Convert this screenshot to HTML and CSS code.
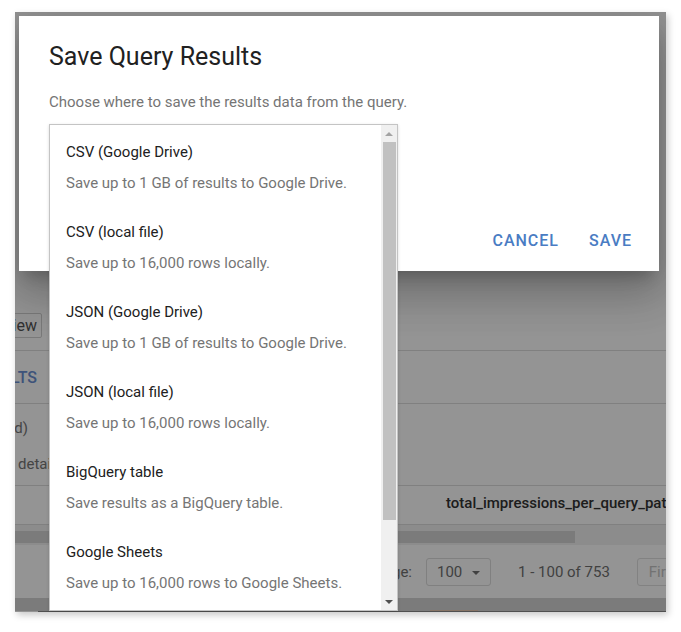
FILE: index.html
```html
<!DOCTYPE html>
<html lang="en">
<head>
<meta charset="utf-8">
<title>Save Query Results</title>
<link rel="stylesheet" href="styles.css">
</head>
<body>
<div class="frame">
  <div class="app">
    <div class="app-spacer"></div>
    <div class="toolbar-row">
      <div class="left-clip"><span class="btn-outline">Preview</span></div>
    </div>
    <div class="tabs-row">
      <div class="left-clip"><span class="tab-active">RESULTS</span></div>
    </div>
    <div class="info-block">
      <div class="left-clip info-line"><span>(unsaved)</span></div>
      <div class="info-line info-clip"><span>Job details</span></div>
    </div>
    <div class="header-row">
      <span class="col-head">total_impressions_per_query_pattern</span>
    </div>
    <div class="hscroll">
      <div class="hscroll-thumb"></div>
    </div>
    <div class="pager">
      <span class="pager-label">Rows per page:</span>
      <span class="pager-select">100 <span class="caret"></span></span>
      <span class="pager-range">1 - 100 of 753</span>
      <span class="pager-first">First</span>
    </div>
    <div class="bottom-bar"><span class="bottom-chip"></span></div>
    <div class="bottom-line"></div>
  </div>

  <div class="scrim"></div>

  <div class="dialog">
    <h1 class="dialog-title">Save Query Results</h1>
    <p class="dialog-text">Choose where to save the results data from the query.</p>
    <div class="dialog-actions">
      <span class="dlg-btn">CANCEL</span>
      <span class="dlg-btn">SAVE</span>
    </div>
  </div>

  <div class="listbox">
    <div class="options">
      <div class="option">
        <div class="opt-title">CSV (Google Drive)</div>
        <div class="opt-desc">Save up to 1 GB of results to Google Drive.</div>
      </div>
      <div class="option">
        <div class="opt-title">CSV (local file)</div>
        <div class="opt-desc">Save up to 16,000 rows locally.</div>
      </div>
      <div class="option">
        <div class="opt-title">JSON (Google Drive)</div>
        <div class="opt-desc">Save up to 1 GB of results to Google Drive.</div>
      </div>
      <div class="option">
        <div class="opt-title">JSON (local file)</div>
        <div class="opt-desc">Save up to 16,000 rows locally.</div>
      </div>
      <div class="option">
        <div class="opt-title">BigQuery table</div>
        <div class="opt-desc">Save results as a BigQuery table.</div>
      </div>
      <div class="option">
        <div class="opt-title">Google Sheets</div>
        <div class="opt-desc">Save up to 16,000 rows to Google Sheets.</div>
      </div>
    </div>
    <div class="vscroll">
      <div class="arrow arrow-up"></div>
      <div class="vthumb"></div>
      <div class="vtrack"></div>
      <div class="arrow arrow-down"></div>
    </div>
  </div>
</div>
</body>
</html>
```
FILE: styles.css
```css
* { box-sizing: border-box; }
html, body { margin: 0; padding: 0; background: #ffffff; }
body { font-family: Roboto, "Liberation Sans", Arial, sans-serif; width: 681px; height: 632px; overflow: hidden; }

.frame {
  position: relative;
  width: 651px;
  height: 600px;
  margin: 12px 0 0 15px;
  background: #ffffff;
  overflow: hidden;
  box-shadow: 2px 3px 7px rgba(0,0,0,0.22);
}

/* ---------- background app ---------- */
.app { display: flex; flex-direction: column; height: 100%; }
.app-spacer { height: 289px; flex-shrink: 0; }
.toolbar-row {
  height: 50px; flex-shrink: 0;
  display: flex; align-items: center;
  border-bottom: 1px solid #dcdcdc;
}
.left-clip {
  width: 27px; overflow: hidden;
  display: flex; justify-content: flex-end; flex-shrink: 0;
  white-space: nowrap;
}
.btn-outline {
  flex-shrink: 0;
  height: 25px; line-height: 23px;
  border: 1px solid #d0d0d0; border-radius: 2px;
  padding: 0 4px 0 8px;
  font-size: 16px; color: #555555;
}
.tabs-row {
  height: 53px; flex-shrink: 0;
  display: flex; align-items: center;
  border-bottom: 1px solid #dcdcdc;
}
.tabs-row .left-clip { width: 22px; }
.tab-active { flex-shrink: 0; font-size: 16px; font-weight: 500; color: #6b8fd2; }
.info-block {
  height: 82px; flex-shrink: 0;
  padding-top: 6px;
  border-bottom: 1px solid #dcdcdc;
}
.info-line { height: 36px; line-height: 36px; font-size: 15px; color: #777777; white-space: nowrap; }
.info-block .left-clip { width: 13px; }
.info-clip { margin-left: -26px; }
.header-row {
  height: 39px; flex-shrink: 0;
  display: flex; align-items: center;
  padding: 0 0 4px 431px;
  border-bottom: 1px solid #dcdcdc;
  white-space: nowrap;
}
.col-head { font-size: 15px; font-weight: 500; color: #333333; }
.hscroll { height: 20px; flex-shrink: 0; background: #f1f1f1; padding-top: 6px; }
.hscroll-thumb { width: 560px; height: 12px; background: #d5d5d5; }
.pager {
  height: 53px; flex-shrink: 0;
  display: flex; align-items: center;
  white-space: nowrap;
  font-size: 15px; color: #707070;
}
.pager-label { width: 397px; text-align: right; flex-shrink: 0; }
.pager-select {
  margin-left: 14px; flex-shrink: 0;
  width: 65px; height: 28px;
  border: 1px solid #dcdcdc; border-radius: 3px;
  display: flex; align-items: center; padding-left: 10px; gap: 10px;
  color: #707070;
}
.caret { width: 0; height: 0; border-left: 4px solid transparent; border-right: 4px solid transparent; border-top: 4px solid #707070; margin-top: 2px; }
.pager-range { margin-left: 27px; flex-shrink: 0; }
.pager-first {
  margin-left: 27px; flex-shrink: 0;
  height: 28px; line-height: 26px;
  border: 1px solid #e0e0e0; border-radius: 3px;
  padding: 0 10px 0 11px; color: #c4c4c4;
}
.bottom-bar { height: 13px; flex-shrink: 0; background: #d4d4d4; position: relative; }
.bottom-chip { position: absolute; left: 415px; bottom: 0; width: 48px; height: 1px; background: #e8c8b0; }
.bottom-line { height: 1px; flex-shrink: 0; margin-left: 23px; background: #8a8a8a; }

.scrim { position: absolute; inset: 0; background: rgba(0,0,0,0.42); }

/* ---------- dialog ---------- */
.dialog {
  position: absolute; left: 4px; top: 4px;
  width: 640px; height: 255px;
  background: #ffffff;
  padding: 24px 27px 13px 30px;
  display: flex; flex-direction: column;
  box-shadow: 0 11px 15px -7px rgba(0,0,0,0.22), 0 24px 38px 3px rgba(0,0,0,0.16), 0 9px 46px 8px rgba(0,0,0,0.12);
}
.dialog-title { margin: 0; font-size: 25px; line-height: 34px; font-weight: 400; color: #212121; }
.dialog-text { margin: 17px 0 0; font-size: 15px; line-height: 22px; color: #757575; }
.dialog-actions { margin-top: auto; display: flex; justify-content: flex-end; gap: 30px; height: 36px; align-items: center; }
.dlg-btn { font-size: 16px; font-weight: 500; letter-spacing: 1px; color: #4a7cc3; }

/* ---------- listbox ---------- */
.listbox {
  position: absolute; left: 34px; top: 112px;
  width: 349px; height: 487px;
  background: #ffffff;
  border: 1px solid #c4c4c4;
  display: flex;
  box-shadow: 0 1px 3px rgba(0,0,0,0.15);
}
.options { flex: 1; overflow: hidden; }
.option { height: 80px; padding: 17px 16px 0 16px; white-space: nowrap; }
.opt-title { font-size: 15px; line-height: 20px; color: #212121; }
.opt-desc { margin-top: 11px; font-size: 15px; line-height: 20px; color: #757575; }
.vscroll { width: 16px; background: #f0f0f0; display: flex; flex-direction: column; flex-shrink: 0; }
.arrow { height: 17px; display: flex; align-items: center; justify-content: center; flex-shrink: 0; }
.arrow::after { content: ""; width: 0; height: 0; border-left: 4px solid transparent; border-right: 4px solid transparent; }
.arrow-up::after { border-bottom: 4px solid #a3a3a3; }
.arrow-down::after { border-top: 4px solid #505050; }
.vthumb { height: 378px; margin: 0 1px 0 2px; background: #c1c1c1; flex-shrink: 0; }
.vtrack { flex: 1; }
```
